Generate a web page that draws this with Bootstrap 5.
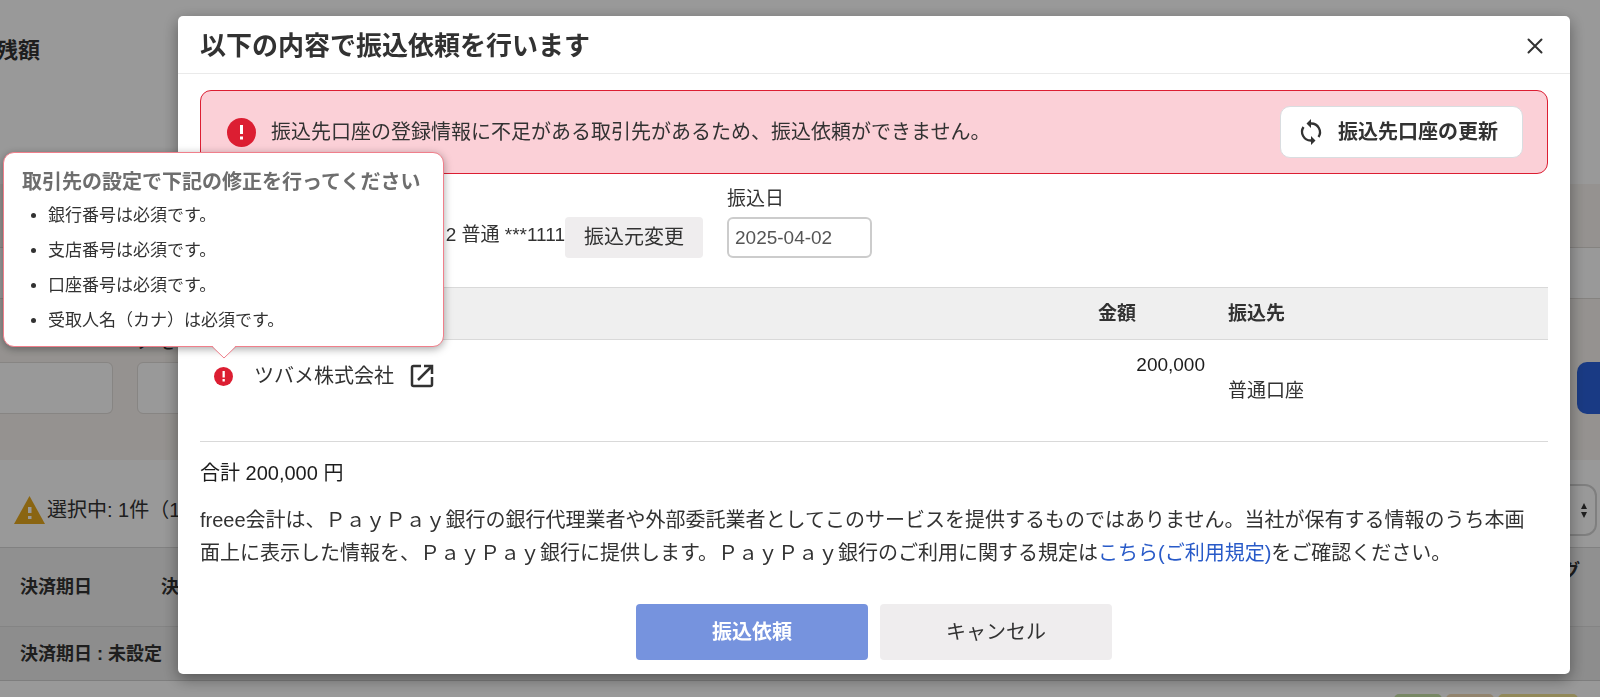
<!DOCTYPE html>
<html lang="ja">
<head>
<meta charset="utf-8">
<meta name="viewport" content="width=device-width, initial-scale=1">
<title>振込依頼</title>
<link href="https://cdn.jsdelivr.net/npm/bootstrap@5.3.0/dist/css/bootstrap.min.css" rel="stylesheet">
<style>
  body { font-family: "Liberation Sans", "Noto Sans CJK JP", sans-serif; font-size: 19px; line-height: 26px; color: #323232; height: 100vh; overflow: hidden; background: #fff; }
  /* page under the dialog */
  .behind { white-space: nowrap; }
  .balance { height: 184px; padding-top: 36px; }
  .balance-title { width: 40px; font-size: 22px; line-height: 30px; }
  .beige { background: #f8f4f0; }
  .strip { height: 64px; border-bottom: 1px solid #dedad6; }
  .tabs-row { height: 51px; border-bottom: 1px solid #dedad6; }
  .filters { height: 161px; padding-top: 31px; }
  .filters input { width: 113px; height: 52px; border-color: #e2dedb; border-radius: 6px; margin-top: 6px; }
  .filters input.from-edge { border-left: 0; border-radius: 0 6px 6px 0; }
  .filters .field-next { margin-left: 24px; width: 112px; }
  .search-btn, .search-btn:hover { width: 23px; height: 52px; margin-top: 32px; background: #2b62dc; border-radius: 10px 0 0 10px; }
  .picked { height: 88px; padding: 12px 3px 0 14px; border-bottom: 1px solid #d8d8d8; font-size: 20px; gap: 2px; }
  .picked select { width: 90px; height: 52px; border: 2px solid #d4d4d4; border-radius: 12px; appearance: none; background: transparent; }
  .picked .arrows { right: 8px; top: 19px; }
  .head-row, .group-row { font-size: 18px; padding: 0 20px; }
  .head-row { height: 79px; background: #f0f0f0; border-bottom: 1px solid #dcdcdc; }
  .head-row .first-col { width: 141px; }
  .head-row .tag-col { padding-bottom: 32px; }
  .group-row { height: 54px; background: #ebebeb; border-bottom: 1px solid #d2d2d2; }
  .data-row { padding: 13px 22px 0 163px; }
  .tag { height: 24px; width: 48px; border-radius: 5px; }
  .tag-green { background: #c9e3a8; } .tag-tan { background: #f3dcb8; } .tag-yellow { background: #f3e496; width: 80px; }
  .shade { position: fixed; inset: 0; background: rgba(0,0,0,.4); }
  /* dialog */
  .modal-dialog { max-width: none; margin: 16px 30px 23px 178px; }
  .modal-content { border: 0; border-radius: 5px; box-shadow: 0 5px 16px rgba(0,0,0,.4); color: #323232; }
  .modal-header { height: 58px; padding: 2px 22px 0; border-color: #eaeaea; }
  .modal-title { font-size: 26px; line-height: 36px; }
  .close-x { width: 26px; height: 32px; }
  .modal-body { padding: 16px 22px 14px; }
  .notice { min-height: 84px; background: #fbd0d7; border: 1px solid #dc1e32; border-radius: 11px; padding: 0 24px 0 26px; font-size: 20px; gap: 15px; }
  .btn { font-size: 20px; line-height: 28px; color: #323232; white-space: nowrap; }
  .btn-refresh, .btn-refresh:hover { background: #fff; border: 1px solid #d9dde0; border-radius: 10px; padding: 11px 24px; gap: 14px; padding-left: 17px; }
  .btn-plain, .btn-plain:hover { background: #efedee; border: 0; border-radius: 4px; }
  .btn-source { padding: 6px 19px 7px; }
  .source { margin-top: 12px; gap: 24px; }
  .account { width: 365px; }
  .account-line { height: 36px; }
  .date-label { margin-bottom: 5px; }
  .date-input { width: 145px; height: 41px; font-size: 19px; padding: 0 6px; border: 2px solid #ccc; border-radius: 6px; color: #555; }
  .pay-table { margin: 29px 0 0; table-layout: fixed; }
  .pay-table th, .pay-table td { border-color: #d9d9d9; color: #323232; background: none; box-shadow: none; padding: 12px 8px; }
  .pay-table thead th { background: #efefef; border-top: 1px solid #d9d9d9; height: 52px; }
  .pay-table tbody td { height: 102px; }
  .pay-table .col-amount { width: 130px; } .pay-table .col-dest { width: 328px; }
  .pay-table td.amount { padding-right: 15px; color: #1c1c1c; }
  .pay-table td.payee { padding: 20px 14px; font-size: 20px; line-height: 32px; }
  .warn-anchor { width: 19px; height: 19px; }
  .payee-name { margin-left: 21px; margin-right: 16px; }
  .tip { position: absolute; bottom: 39px; left: -211px; width: 441px; background: #fff; border: 1px solid #f07f8b; border-radius: 11px; padding: 13px 18px 8px; box-shadow: 0 2px 8px rgba(0,0,0,.35); z-index: 5; }
  .tip-title { font-size: 20px; line-height: 32px; color: #6e6e6e; white-space: nowrap; }
  .tip ul { font-size: 17px; line-height: 35px; padding-left: 26px; }
  .tip-arrow { position: absolute; left: 207px; top: 100%; margin-top: -2px; }
  .total { font-size: 20px; line-height: 30px; margin: 16px 0; color: #1c1c1c; }
  .terms { font-size: 20px; line-height: 33px; margin: 0; padding-right: 4px; }
  .terms a { color: #285ac8; text-decoration: none; }
  .actions { margin-top: 34px; gap: 12px; }
  .actions .btn { width: 232px; height: 56px; border-radius: 4px; }
  .btn-submit, .btn-submit:disabled { background: #7693de; border: 0; color: #fff; opacity: 1; }
</style>
<script src="https://cdn.jsdelivr.net/npm/bootstrap@5.3.0/dist/js/bootstrap.bundle.min.js"></script>
</head>
<body>
<main class="behind">
  <section class="balance"><div class="balance-title d-flex justify-content-end fw-bold">残額</div></section>
  <div class="beige strip"></div>
  <div class="tabs-row"></div>
  <section class="beige filters d-flex">
    <div><label class="d-block" for="f1">&nbsp;</label><input id="f1" class="form-control from-edge" type="text"></div>
    <div class="field-next"><label class="d-block" for="f2">メモ</label><input id="f2" class="form-control" type="text"></div>
    <button class="btn search-btn ms-auto p-0" type="button" aria-label="検索"></button>
  </section>
  <section class="picked d-flex align-items-center">
    <svg width="31" height="28" viewBox="0 0 31 28" aria-hidden="true"><path d="M15.500 0L31 28H0z" fill="#e6a81e"/><path d="M14 11h3.500v6H14zM14 20h3.500v3H14z" fill="#fff"/></svg>
    <span>選択中: 1件（1</span>
    <div class="position-relative ms-auto">
      <select aria-label="表示件数" class="d-block"><option></option></select>
      <svg class="arrows position-absolute" width="10" height="16" viewBox="0 0 10 16" aria-hidden="true"><path d="M5 0L8 6H2zM5 15L2 9H8z" fill="#333"/></svg>
    </div>
  </section>
  <div class="head-row d-flex align-items-center fw-bold">
    <span class="first-col">決済期日</span><span>決</span><span class="ms-auto tag-col">グ</span>
  </div>
  <div class="group-row d-flex align-items-center fw-bold">決済期日 : 未設定</div>
  <div class="data-row d-flex gap-1">
    <span class="tag tag-green ms-auto"></span><span class="tag tag-tan"></span><span class="tag tag-yellow"></span>
  </div>
</main>

<div class="shade"></div>

<div class="modal d-block overflow-hidden" role="dialog" aria-labelledby="dlg-title">
  <div class="modal-dialog">
    <div class="modal-content">
      <div class="modal-header d-flex justify-content-between">
        <h1 class="modal-title fw-bold" id="dlg-title">以下の内容で振込依頼を行います</h1>
        <button type="button" class="btn close-x p-0 border-0 d-flex align-items-center justify-content-center" aria-label="閉じる">
          <svg width="16" height="16" viewBox="0 0 16 16" fill="none" stroke="#323232" stroke-width="2" stroke-linecap="round"><path d="M1.500 1.500l13 13M14.500 1.500l-13 13"/></svg>
        </button>
      </div>
      <div class="modal-body">
        <div class="notice d-flex align-items-center">
          <svg width="29" height="29" viewBox="0 0 29 29" aria-hidden="true"><circle cx="14.500" cy="14.500" r="14.500" fill="#dc1e32"/><path d="M13 7h3v9h-3zM13 18.500h3v3h-3z" fill="#fff"/></svg>
          <span>振込先口座の登録情報に不足がある取引先があるため、振込依頼ができません。</span>
          <button type="button" class="btn btn-refresh fw-bold ms-auto d-flex align-items-center">
            <svg width="26" height="28" viewBox="0 0 26 28" fill="none" stroke="#323232" stroke-width="2.300" aria-hidden="true">
              <path d="M12 5.500h1A8.700 8.700 0 0 1 20.500 19M14 22.500h-1A8.700 8.700 0 0 1 5.500 9"/>
              <path d="M13 1v9L8.500 5.500zM13 18v9l4.500-4.500z" fill="#323232" stroke="none"/>
            </svg>
            <span>振込先口座の更新</span>
          </button>
        </div>

        <div class="source d-flex align-items-end">
          <div class="d-flex align-items-end">
            <div class="account account-line text-end">2 普通 ***1111</div>
            <button type="button" class="btn btn-plain btn-source">振込元変更</button>
          </div>
          <div>
            <label for="pay-date" class="d-block date-label">振込日</label>
            <input id="pay-date" class="date-input d-block" type="text" value="2025-04-02">
          </div>
        </div>

        <table class="table pay-table">
          <colgroup><col><col class="col-amount"><col class="col-dest"></colgroup>
          <thead><tr><th></th><th>金額</th><th>振込先</th></tr></thead>
          <tbody>
            <tr>
              <td class="payee">
                <div class="d-flex align-items-center">
                  <div class="warn-anchor position-relative d-flex">
                    <svg width="19" height="19" viewBox="0 0 29 29" aria-hidden="true"><circle cx="14.500" cy="14.500" r="14.500" fill="#dc1e32"/><path d="M13 6h3.500v10H13zM13 18.500h3.500V22H13z" fill="#fff"/></svg>
                    <div class="tip" role="tooltip">
                      <div class="tip-title fw-bold">取引先の設定で下記の修正を行ってください</div>
                      <ul class="mb-0">
                        <li>銀行番号は必須です。</li>
                        <li>支店番号は必須です。</li>
                        <li>口座番号は必須です。</li>
                        <li>受取人名（カナ）は必須です。</li>
                      </ul>
                      <svg class="tip-arrow" width="26" height="15" viewBox="0 0 26 15" aria-hidden="true"><path d="M0 0v1.500h1L13 14 25 1.500h1V0z" fill="#fff"/><path d="M0 2.500h1L13 14 25 2.500h1" fill="none" stroke="#f07f8b"/></svg>
                    </div>
                  </div>
                  <span class="payee-name">ツバメ株式会社</span>
                  <a href="#" aria-label="取引先を開く" class="d-flex"><svg width="24" height="24" viewBox="0 0 24 24" fill="none" stroke="#323232" stroke-width="2.500"><path d="M11 2H3.500Q2 2 2 3.500v17Q2 22 3.500 22h17q1.500 0 1.500-1.500V13M14 2h8v8M22 2L8 16"/></svg></a>
                </div>
              </td>
              <td class="amount text-end">200,000</td>
              <td><br>普通口座</td>
            </tr>
          </tbody>
        </table>

        <p class="total">合計 200,000 円</p>
        <p class="terms">freee会計は、ＰａｙＰａｙ銀行の銀行代理業者や外部委託業者としてこのサービスを提供するものではありません。当社が保有する情報のうち本画面上に表示した情報を、ＰａｙＰａｙ銀行に提供します。ＰａｙＰａｙ銀行のご利用に関する規定は<a href="#">こちら(ご利用規定)</a>をご確認ください。</p>

        <div class="actions d-flex justify-content-center">
          <button type="button" class="btn btn-submit fw-bold" disabled>振込依頼</button>
          <button type="button" class="btn btn-plain">キャンセル</button>
        </div>
      </div>
    </div>
  </div>
</div>
</body>
</html>
